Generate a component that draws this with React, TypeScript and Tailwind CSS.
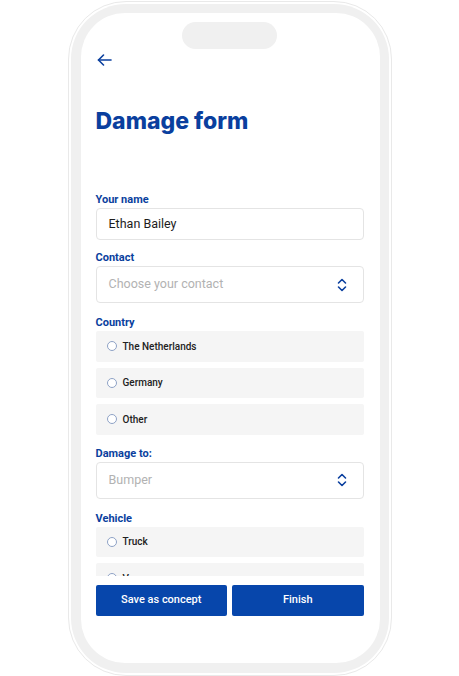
import React from 'react';

const Label: React.FC<{ text: string; className?: string }> = ({ text, className = '' }) => (
  <div className={`text-[11px] leading-[14px] font-bold text-[#0a3f9e] ${className}`}>{text}</div>
);

const Chevrons: React.FC = () => (
  <svg className="shrink-0" width="10" height="14" viewBox="0 0 10 14" fill="none" stroke="#0a3f9e" strokeWidth="1.6" strokeLinecap="round" strokeLinejoin="round">
    <path d="M1.5 5L5 1.5L8.5 5" />
    <path d="M1.5 9L5 12.5L8.5 9" />
  </svg>
);

const Select: React.FC<{ placeholder: string }> = ({ placeholder }) => (
  <div className="mt-px h-[37px] flex items-center justify-between rounded-[4px] border border-[#e4e4e4] bg-white pl-[12px] pr-[16px]">
    <span className="text-[12.5px] text-[#b2b2b2]">{placeholder}</span>
    <Chevrons />
  </div>
);

const Radio: React.FC<{ text: string }> = ({ text }) => (
  <div className="h-[30.5px] flex items-center gap-[6px] rounded-[2px] bg-[#f5f5f5] pl-[11px]">
    <span className="shrink-0 w-[10px] h-[10px] rounded-full border border-[#8ea2c6] bg-white" />
    <span className="text-[10px] font-medium text-[#222]">{text}</span>
  </div>
);

export default function App() {
  return (
    <div className="w-[459px] h-[676px] bg-white flex justify-center pt-px" style={{ fontFamily: 'Roboto, "Noto Sans", sans-serif' }}>
      <div className="w-[324px] h-[675px] rounded-[58px] border border-[#e9e9e9] bg-white p-[2px]">
        <div className="h-full rounded-[55px] bg-[#f0f0f0] pt-[9px] pb-[10px] pl-[10px] pr-[9px]">
          <div className="h-full rounded-[44px] bg-white flex flex-col">
            <div className="flex-1 min-h-0 overflow-hidden pl-[15px] pr-[16px]">
              <div className="pt-[9px]">
                <div className="mx-auto w-[95px] h-[27px] rounded-full bg-[#f0f0f0]" />
              </div>
              <svg className="block mt-[5px] ml-[1px]" width="15" height="12" viewBox="0 0 15 12" fill="none" stroke="#0a3f9e" strokeWidth="1.6" strokeLinecap="round" strokeLinejoin="round">
                <path d="M14 6H1.5" />
                <path d="M6.5 1L1.5 6L6.5 11" />
              </svg>
              <h1 className="mt-[41px] text-[23px] leading-[28px] font-extrabold text-[#0a3f9e]" style={{ fontFamily: 'Inter, sans-serif' }}>Damage form</h1>

              <Label text="Your name" className="mt-[58px]" />
              <div className="mt-px h-[32px] flex items-center rounded-[4px] border border-[#e4e4e4] bg-white pl-[12px]">
                <span className="text-[12.5px] text-[#1d1d1d]">Ethan Bailey</span>
              </div>

              <Label text="Contact" className="mt-[11px]" />
              <Select placeholder="Choose your contact" />

              <Label text="Country" className="mt-[13px]" />
              <div className="mt-px flex flex-col gap-[6px]">
                <Radio text="The Netherlands" />
                <Radio text="Germany" />
                <Radio text="Other" />
              </div>

              <Label text="Damage to:" className="mt-[12px]" />
              <Select placeholder="Bumper" />

              <Label text="Vehicle" className="mt-[13px]" />
              <div className="mt-px flex flex-col gap-[6px]">
                <Radio text="Truck" />
                <Radio text="Van" />
              </div>
            </div>
            <div className="shrink-0 pt-[9px] pb-[47px] pl-[15px] pr-[16px] flex gap-[5px]">
              <button className="flex-1 h-[31px] rounded-[2px] bg-[#0746ab] text-white text-[11px] font-medium">Save as concept</button>
              <button className="flex-1 h-[31px] rounded-[2px] bg-[#0746ab] text-white text-[11px] font-medium">Finish</button>
            </div>
          </div>
        </div>
      </div>
    </div>
  );
}
